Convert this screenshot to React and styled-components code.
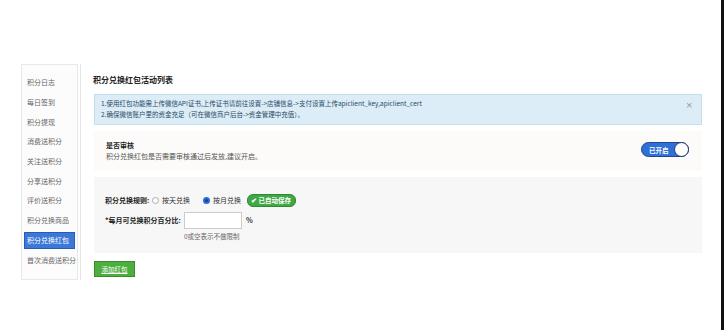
import React from "react";
import styled, { createGlobalStyle } from "styled-components";

const GlobalStyle = createGlobalStyle`
  html, body {
    margin: 0;
    padding: 0;
    background: #fff;
  }
  body {
    font-family: "Noto Sans CJK SC", "Noto Sans", sans-serif;
    color: #333;
  }
`;

const Page = styled.div`
  width: 724px;
  height: 330px;
  box-sizing: border-box;
  border-right: 3px solid #111;
  padding: 64px 0 0 21px;
  display: flex;
  align-items: flex-start;
  overflow: hidden;
`;

const Sidebar = styled.ul`
  list-style: none;
  margin: 0;
  width: 57px;
  height: 216px;
  box-sizing: border-box;
  padding: 8px 2px 0;
  border: 1px solid #e8e8e8;
  background: #fcfcfc;
  display: flex;
  flex-direction: column;
  overflow: hidden;
`;

const NavItem = styled.li`
  height: 19.7px;
  flex: none;
  display: flex;
  align-items: center;
  font-size: 7px;
  white-space: nowrap;
  color: ${(p) => (p.active ? "#fff" : "#666")};

  span {
    display: block;
    width: 100%;
    box-sizing: border-box;
    padding: 0 2px;
    line-height: 15px;
    background: ${(p) => (p.active ? "#3b78d8" : "transparent")};
    border: 1px solid ${(p) => (p.active ? "#2a5bb0" : "transparent")};
  }
`;

const Main = styled.div`
  margin-left: 2px;
  width: 622px;
  height: 216px;
  border-left: 1px solid #e4e4e4;
  padding-left: 13px;
  box-sizing: border-box;
  display: flex;
  flex-direction: column;
`;

const Title = styled.h3`
  margin: 10px 0 0 -1px;
  font-size: 8px;
  line-height: 12px;
  font-weight: bold;
  color: #222;
`;

const Notice = styled.div`
  margin-top: 8px;
  width: 608px;
  height: 31px;
  box-sizing: border-box;
  background: #dcedf7;
  border: 1px solid #c3dfec;
  padding: 3px 8px 0 6px;
  display: flex;
  justify-content: space-between;
  font-size: 6.5px;
  line-height: 11px;
  color: #2a4a66;
`;

const Close = styled.span`
  color: #999;
  font-size: 9px;
  line-height: 14px;
  font-family: "DejaVu Sans", sans-serif;
`;

const Box = styled.div`
  width: 608px;
  box-sizing: border-box;
  background: ${(p) => p.bg};
  height: ${(p) => p.h}px;
  margin-top: ${(p) => p.mt}px;
  padding: ${(p) => p.pad};
`;

const AuditRow = styled.div`
  display: flex;
  justify-content: space-between;
  align-items: flex-start;
`;

const Label = styled.div`
  font-size: 7px;
  line-height: 11px;
  font-weight: bold;
  color: #222;
`;

const Desc = styled.div`
  font-size: 7px;
  line-height: 11px;
  color: #555;
`;

const Toggle = styled.div`
  margin: 2px 13px 0 0;
  width: 48px;
  height: 15px;
  box-sizing: border-box;
  border-radius: 8px;
  background: #2f6fd8;
  border: 1px solid #24468c;
  display: flex;
  align-items: center;
  justify-content: space-between;
  padding-left: 7px;
  font-size: 6.5px;
  font-weight: bold;
  color: #fff;
`;

const Knob = styled.span`
  width: 15px;
  height: 15px;
  margin-right: -1px;
  box-sizing: border-box;
  border-radius: 50%;
  background: #fff;
  border: 1.5px solid #1f3566;
`;

const FormLine = styled.div`
  display: flex;
  align-items: center;
  font-size: 7px;
  color: #333;
  height: ${(p) => p.h}px;
  margin-top: ${(p) => p.mt || 0}px;
`;

const FieldLabel = styled.span`
  font-weight: bold;
  color: #222;
  width: ${(p) => p.w}px;
`;

const Radio = styled.label`
  display: flex;
  align-items: center;
  gap: 3px;
  margin-left: ${(p) => p.ml}px;
`;

const Dot = styled.span`
  width: 7px;
  height: 7px;
  box-sizing: border-box;
  border-radius: 50%;
  border: ${(p) => (p.on ? "2px solid #2d6ad6" : "1px solid #aaa")};
  background: ${(p) => (p.on ? "#1c3f8a" : "#fff")};
`;

const Saved = styled.span`
  margin-left: 6px;
  height: 11px;
  padding: 0 4px 0 3px;
  border-radius: 6px;
  background: #3fa844;
  border: 1px solid #2f8a34;
  color: #fff;
  font-weight: bold;
  font-size: 6.5px;
  display: flex;
  align-items: center;
  gap: 2px;
`;

const Input = styled.input`
  width: 58px;
  height: 17px;
  box-sizing: border-box;
  border: 1px solid #ccc;
  background: #fff;
  margin: 0 4px 0 0;
  padding: 0;
`;

const Hint = styled.div`
  margin: 2px 0 0 79px;
  font-size: 6.5px;
  color: #666;
`;

const AddButton = styled.button`
  margin-top: 8px;
  align-self: flex-start;
  width: 41px;
  height: 16px;
  padding: 0;
  border: 1px solid #3b8c2a;
  background: #4cae3c;
  color: #fff;
  font-family: inherit;
  font-size: 6.5px;
  text-decoration: underline;
`;

const navItems = [
  "积分日志",
  "每日签到",
  "积分提现",
  "消费送积分",
  "关注送积分",
  "分享送积分",
  "评价送积分",
  "积分兑换商品",
  "积分兑换红包",
  "首次消费送积分",
];

export default function App() {
  return (
    <>
      <GlobalStyle />
      <Page>
        <Sidebar>
          {navItems.map((item) => (
            <NavItem key={item} active={item === "积分兑换红包"}>
              <span>{item}</span>
            </NavItem>
          ))}
        </Sidebar>
        <Main>
          <Title>积分兑换红包活动列表</Title>
          <Notice>
            <div>
              1.使用红包功能需上传微信API证书,上传证书请前往设置-&gt;店铺信息-&gt;支付设置上传apiclient_key,apiclient_cert
              <br />
              2.确保微信账户里的资金充足（可在微信商户后台-&gt;资金管理中充值）。
            </div>
            <Close>×</Close>
          </Notice>
          <Box bg="#fcfbf9" h={40} mt={6} pad="9px 0 0 12px">
            <AuditRow>
              <div>
                <Label>是否审核</Label>
                <Desc>积分兑换红包是否需要审核通过后发放,建议开启。</Desc>
              </div>
              <Toggle>
                已开启
                <Knob />
              </Toggle>
            </AuditRow>
          </Box>
          <Box bg="#f7f7f7" h={76} mt={6} pad="16px 0 0 11px">
            <FormLine h={14}>
              <FieldLabel w={47}>积分兑换规则:</FieldLabel>
              <Radio ml={0}>
                <Dot />
                按天兑换
              </Radio>
              <Radio ml={13}>
                <Dot on />
                按月兑换
              </Radio>
              <Saved>✔ 已自动保存</Saved>
            </FormLine>
            <FormLine h={18} mt={4}>
              <FieldLabel w={79}>*每月可兑换积分百分比:</FieldLabel>
              <Input />
              <b>%</b>
            </FormLine>
            <Hint>0或空表示不做限制</Hint>
          </Box>
          <AddButton>添加红包</AddButton>
        </Main>
      </Page>
    </>
  );
}
